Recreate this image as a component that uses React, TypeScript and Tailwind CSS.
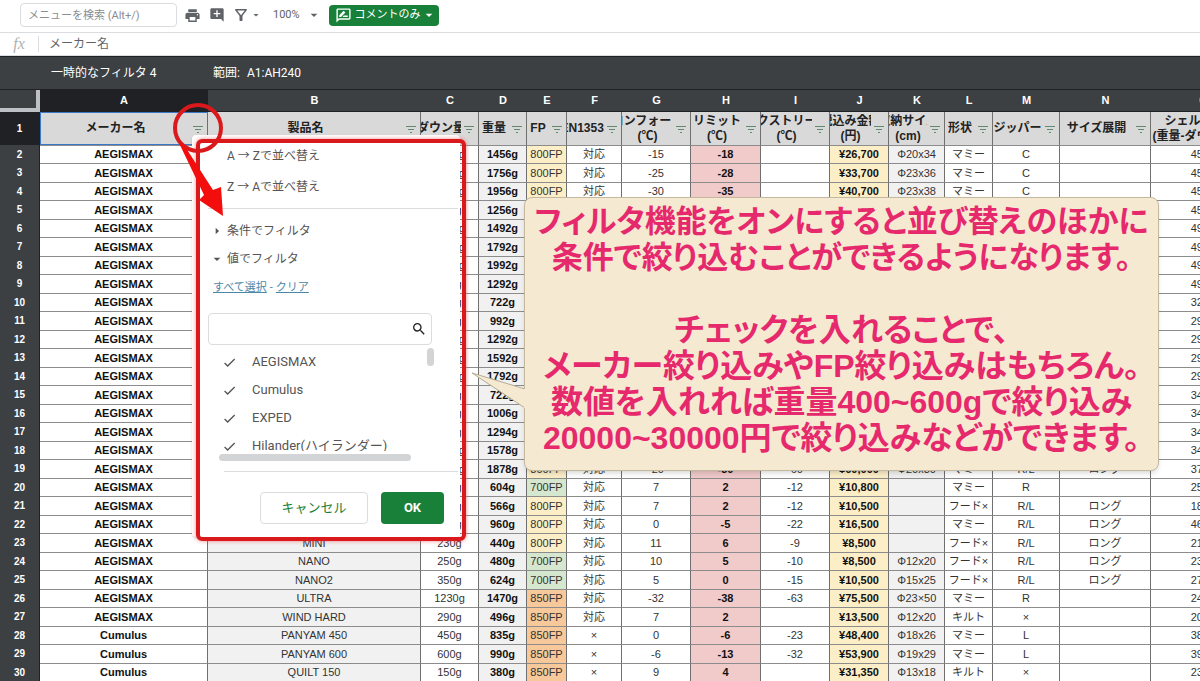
import { clsx } from 'clsx';
import { MdAddComment, MdArrowDropDown, MdArrowRight, MdCheck, MdOutlineFilterAlt, MdOutlineRateReview, MdPrint, MdSearch } from 'react-icons/md';

type Column = {
  id: string;
  width: string;
  title: string[];
  cell?: string;
};

const columns: Column[] = [
  { id: 'A', width: 'w-[168px]', title: ['メーカー名'], cell: 'font-bold text-[#111]' },
  { id: 'B', width: 'w-[213px]', title: ['製品名'], cell: 'bg-[#f1f1f1]' },
  { id: 'C', width: 'w-[58px]', title: ['ダウン量'] },
  { id: 'D', width: 'w-[48px]', title: ['重量'], cell: 'bg-[#f1f1f1] font-bold text-[#111]' },
  { id: 'E', width: 'w-[40px]', title: ['FP'] },
  { id: 'F', width: 'w-[55px]', title: ['EN13537'] },
  { id: 'G', width: 'w-[69px]', title: ['コンフォート', '(℃)'] },
  { id: 'H', width: 'w-[70px]', title: ['リミット', '(℃)'], cell: 'bg-[#f1caca] font-bold text-[#111]' },
  { id: 'I', width: 'w-[69px]', title: ['エクストリーム', '(℃)'] },
  { id: 'J', width: 'w-[59px]', title: ['税込み金額', '(円)'], cell: 'bg-[#fcefc8] font-bold text-[#111]' },
  { id: 'K', width: 'w-[56px]', title: ['収納サイズ', '(cm)'], cell: 'bg-[#f1f1f1]' },
  { id: 'L', width: 'w-[48px]', title: ['形状'] },
  { id: 'M', width: 'w-[67px]', title: ['ジッパー'] },
  { id: 'N', width: 'w-[91px]', title: ['サイズ展開'] },
  { id: 'O', width: 'w-[105px]', title: ['シェル重量', '(重量-ダウン量)'] },
];

const fpColor: Record<string, string> = {
  '700FP': 'bg-[#d5e8cf]',
  '800FP': 'bg-[#fcefc8]',
  '850FP': 'bg-[#f7c899]',
};

// maker, name, down, weight, FP, EN13537, comfort, limit, extreme, price, size, shape, zip, sizes, shell
const rows: string[][] = [
  ['AEGISMAX', '', '1000g', '1456g', '800FP', '対応', '-15', '-18', '', '¥26,700', 'Φ20x34', 'マミー', 'C', '', '456g'],
  ['AEGISMAX', '', '1300g', '1756g', '800FP', '対応', '-25', '-28', '', '¥33,700', 'Φ23x36', 'マミー', 'C', '', '456g'],
  ['AEGISMAX', '', '1500g', '1956g', '800FP', '対応', '-30', '-35', '', '¥40,700', 'Φ23x38', 'マミー', 'C', '', '456g'],
  ['AEGISMAX', '', '800g', '1256g', '', '', '', '', '', '', '', '', '', '', '456g'],
  ['AEGISMAX', '', '1000g', '1492g', '', '', '', '', '', '', '', '', '', '', '492g'],
  ['AEGISMAX', '', '1300g', '1792g', '', '', '', '', '', '', '', '', '', '', '492g'],
  ['AEGISMAX', '', '1500g', '1992g', '', '', '', '', '', '', '', '', '', '', '492g'],
  ['AEGISMAX', '', '800g', '1292g', '', '', '', '', '', '', '', '', '', '', '492g'],
  ['AEGISMAX', '', '400g', '722g', '', '', '', '', '', '', '', '', '', '', '322g'],
  ['AEGISMAX', '', '700g', '992g', '', '', '', '', '', '', '', '', '', '', '292g'],
  ['AEGISMAX', '', '1000g', '1292g', '', '', '', '', '', '', '', '', '', '', '292g'],
  ['AEGISMAX', '', '1300g', '1592g', '', '', '', '', '', '', '', '', '', '', '292g'],
  ['AEGISMAX', '', '1500g', '1792g', '', '', '', '', '', '', '', '', '', '', '292g'],
  ['AEGISMAX', '', '380g', '722g', '', '', '', '', '', '', '', '', '', '', '342g'],
  ['AEGISMAX', '', '660g', '1006g', '', '', '', '', '', '', '', '', '', '', '346g'],
  ['AEGISMAX', '', '950g', '1294g', '', '', '', '', '', '', '', '', '', '', '344g'],
  ['AEGISMAX', '', '1230g', '1578g', '', '', '', '', '', '', '', '', '', '', '348g'],
  ['AEGISMAX', '', '1500g', '1878g', '800FP', '対応', '-20', '-30', '-60', '¥60,000', 'Φ20x30', 'マミー', 'R/L', 'ロング', '378g'],
  ['AEGISMAX', '', '350g', '604g', '700FP', '対応', '7', '2', '-12', '¥10,800', '', 'マミー', 'R', '', '254g'],
  ['AEGISMAX', '', '380g', '566g', '800FP', '対応', '7', '2', '-12', '¥10,500', '', 'フード×', 'R/L', 'ロング', '186g'],
  ['AEGISMAX', '', '500g', '960g', '800FP', '対応', '0', '-5', '-22', '¥16,500', '', 'マミー', 'R/L', 'ロング', '460g'],
  ['AEGISMAX', 'MINI', '230g', '440g', '800FP', '対応', '11', '6', '-9', '¥8,500', '', 'フード×', 'R/L', 'ロング', '210g'],
  ['AEGISMAX', 'NANO', '250g', '480g', '700FP', '対応', '10', '5', '-10', '¥8,500', 'Φ12x20', 'フード×', 'R/L', 'ロング', '230g'],
  ['AEGISMAX', 'NANO2', '350g', '624g', '700FP', '対応', '5', '0', '-15', '¥10,500', 'Φ15x25', 'フード×', 'R/L', 'ロング', '274g'],
  ['AEGISMAX', 'ULTRA', '1230g', '1470g', '850FP', '対応', '-32', '-38', '-63', '¥75,500', 'Φ23×50', 'マミー', 'R', '', '240g'],
  ['AEGISMAX', 'WIND HARD', '290g', '496g', '850FP', '対応', '7', '2', '', '¥13,500', 'Φ12x20', 'キルト', '×', '', '206g'],
  ['Cumulus', 'PANYAM 450', '450g', '835g', '850FP', '×', '0', '-6', '-23', '¥48,400', 'Φ18x26', 'マミー', 'L', '', '385g'],
  ['Cumulus', 'PANYAM 600', '600g', '990g', '850FP', '×', '-6', '-13', '-32', '¥53,900', 'Φ19x29', 'マミー', 'L', '', '390g'],
  ['Cumulus', 'QUILT 150', '150g', '380g', '850FP', '×', '9', '4', '', '¥31,350', 'Φ13x18', 'キルト', '×', '', '230g'],
];

const makers = ['AEGISMAX', 'Cumulus', 'EXPED', 'Hilander(ハイランダー)'];

const calloutIntro = [
  'フィルタ機能をオンにすると並び替えのほかに',
  '条件で絞り込むことができるようになります。',
];

const calloutDetail = [
  'チェックを入れることで、',
  'メーカー絞り込みやFP絞り込みはもちろん。',
  '数値を入れれば重量400~600gで絞り込み',
  '20000~30000円で絞り込みなどができます。',
];

function Toolbar() {
  return (
    <div className="flex h-8 items-center bg-white pb-[2px] pl-5 text-[11px] text-[#5f6368]">
      <input
        type="text"
        aria-label="メニューを検索"
        placeholder="メニューを検索 (Alt+/)"
        className="h-6 w-[157px] rounded border border-[#dadce0] px-[7px] placeholder:text-[#8a8d91]"
      />
      <button aria-label="印刷" className="ml-[7px]"><MdPrint size={17} /></button>
      <button aria-label="コメントを追加" className="ml-2"><MdAddComment size={16} /></button>
      <button aria-label="フィルタ" className="ml-[7px] flex items-center">
        <MdOutlineFilterAlt size={18} />
        <MdArrowDropDown size={12} />
      </button>
      <button aria-label="ズーム" className="ml-[11px] flex items-center">
        100%
        <MdArrowDropDown size={16} className="ml-[6px]" />
      </button>
      <button className="ml-[7px] flex h-[21px] w-[110px] items-center rounded-sm bg-[#188038] pl-[6px] text-white">
        <MdOutlineRateReview size={17} />
        <span className="ml-[3px] whitespace-nowrap">コメントのみ</span>
        <MdArrowDropDown size={16} />
      </button>
    </div>
  );
}

function FilterIcon() {
  return (
    <svg viewBox="0 0 10 8" className="h-2 w-[10px] shrink-0" stroke="#5f8a70" strokeWidth="1">
      <path d="M0 1.5h10M2 4.5h6M4 7.5h2" />
    </svg>
  );
}

function Sheet() {
  return (
    <div className="overflow-hidden">
      <table className="w-[1256px] table-fixed border-separate border-spacing-0 text-center text-[11px] leading-[17px] text-[#333]">
        <colgroup>
          <col className="w-10" />
          {columns.map((c) => <col key={c.id} className={c.width} />)}
        </colgroup>
        <thead>
          <tr className="h-[22px] bg-[#3c4043] text-white">
            <td className="border-r-4 border-b-4 border-[#bdc1c6] bg-[#3c4043]" />
            {columns.map((c) => (
              <th key={c.id} scope="col" className={clsx('border-b border-[#202124]', c.id === 'A' && 'bg-[#202124]')}>{c.id}</th>
            ))}
          </tr>
          <tr className="h-[33px] bg-[#d9d9d9]">
            <th scope="row" className="border-r border-[#202124] bg-[#202124] text-[10px] text-white">1</th>
            {columns.map((c) => (
              <th
                key={c.id}
                className={clsx(
                  'p-0 font-bold text-[#222]',
                  c.id === 'A' ? 'border border-[#3c78c8]' : 'border-r border-[#707070]',
                )}
              >
                <div className="flex items-center gap-[3px] pr-1">
                  <div className="flex min-w-0 flex-1 flex-col items-center overflow-hidden text-[12px] leading-[15px] whitespace-nowrap">
                    {c.title.map((t) => <span key={t}>{t}</span>)}
                  </div>
                  <FilterIcon />
                </div>
              </th>
            ))}
          </tr>
        </thead>
        <tbody>
          {rows.map((row, i) => (
            <tr key={i} className="h-[18px] even:h-[19px]">
              <th scope="row" className="border-r border-[#202124] bg-[#3c4043] p-0 text-[10px] text-white">{i + 2}</th>
              {row.map((value, n) => (
                <td
                  key={columns[n].id}
                  className={clsx(
                    'overflow-hidden border-t border-r border-t-[#8c8c8c] border-r-[#707070] p-0 whitespace-nowrap',
                    columns[n].cell,
                    fpColor[value],
                  )}
                >
                  {value}
                </td>
              ))}
            </tr>
          ))}
        </tbody>
      </table>
    </div>
  );
}

function FilterMenu() {
  return (
    <div className="absolute top-[135px] left-[192px] h-[402px] w-[268px] rounded bg-white pt-[5px] text-[12px] text-[#555] shadow-sm">
      <button className="flex h-[31px] w-full items-center pl-[35px]">A → Zで並べ替え</button>
      <button className="flex h-[31px] w-full items-center pl-[35px]">Z → Aで並べ替え</button>
      <hr className="mt-[6px] mr-[2px] mb-2 ml-4 border-[#dadce0]" />
      <button className="flex h-7 w-full items-center pl-[17px]"><MdArrowRight size={16} className="mr-[2px]" />条件でフィルタ</button>
      <button className="flex h-7 w-full items-center pl-[17px]"><MdArrowDropDown size={16} className="mr-[2px]" />値でフィルタ</button>
      <div className="flex h-[30px] items-center gap-[3px] pl-[21px] text-[11px] text-[#4a86a8]">
        <a href="#all" className="underline">すべて選択</a>
        <span>-</span>
        <a href="#clear" className="underline">クリア</a>
      </div>
      <div className="mt-[10px] ml-4 flex h-8 w-56 items-center rounded-sm border border-[#dadce0] pr-1">
        <input type="text" aria-label="値を検索" className="min-w-0 flex-1" />
        <MdSearch size={16} className="text-[#222]" />
      </div>
      <div className="mt-[2px] mr-[26px] ml-[30px] flex justify-between">
        <div className="h-[104px] overflow-hidden pt-px">
          {makers.map((m) => (
            <label key={m} className="relative flex h-7 items-center text-[13px]">
              <input type="checkbox" defaultChecked className="peer sr-only" />
              <MdCheck size={15} className="invisible mr-[15px] peer-checked:visible" />
              {m}
            </label>
          ))}
        </div>
        <div className="mt-[1px] h-[18px] w-[7px] rounded bg-[#d3d4d6]" />
      </div>
      <div className="mt-[3px] ml-[27px] h-[7px] w-48 rounded bg-[#d3d4d6]" />
      <hr className="mt-[10px] mr-[2px] ml-8 border-[#dadce0]" />
      <div className="mt-5 mr-4 flex justify-end gap-[13px] text-[13px]">
        <button className="h-8 w-[108px] rounded border border-[#dadce0] text-[#188038]">キャンセル</button>
        <button className="h-8 w-[63px] rounded bg-[#188038] font-bold text-white">OK</button>
      </div>
    </div>
  );
}

// red frame, circle and arrow that point at the filter button
function Markup() {
  return (
    <>
      <div className="absolute top-[139px] left-[196px] h-[402px] w-[270px] rounded-md border-4 border-[#d9191c] shadow-[0_0_4px_rgba(240,60,60,0.6)]" />
      <svg viewBox="0 0 60 120" className="absolute top-[100px] left-[170px] h-[120px] w-[60px]">
        <circle cx="28" cy="28" r="23" fill="none" stroke="#d9191c" strokeWidth="4" />
        <path d="M9 43l5 2 29 45 8-3 2 29-24-16 5-5z" fill="#f40d0d" />
      </svg>
    </>
  );
}

function Callout() {
  return (
    <div className="absolute top-[197px] left-[524px] w-[635px] rounded-lg border border-[#c4b99f] bg-[#f5e9d2] pt-[6px] pb-[14px] text-center leading-9 font-bold whitespace-nowrap text-[#e6296c] shadow-md [font-feature-settings:'palt'] font-['Liberation_Sans','Noto_Sans_CJK_JP',sans-serif]">
      <svg viewBox="0 0 56 40" className="absolute top-[172px] -left-[54px] h-10 w-14">
        <path d="M54 19L1 3l53 35" fill="#f5e9d2" stroke="#b5ab94" />
        <path d="M53 19h3v19h-3z" fill="#f5e9d2" />
      </svg>
      <div className="mb-9 text-[31px] leading-9">
        {calloutIntro.map((line) => <p key={line}>{line}</p>)}
      </div>
      <div className="text-[32px] leading-9">
        {calloutDetail.map((line) => <p key={line}>{line}</p>)}
      </div>
    </div>
  );
}

export default function App() {
  return (
    <main className="relative h-screen overflow-hidden bg-white font-['Roboto','Noto_Sans_CJK_JP',sans-serif]">
      <Toolbar />
      <div className="flex h-6 items-center border-y border-[#dadce0] text-[12px] text-[#5f6368]">
        <span className="w-[39px] border-r border-[#dadce0] text-center font-['Liberation_Serif',serif] text-[16px] leading-4 text-[#b0b0b0] italic">fx</span>
        <span className="pl-[10px]">メーカー名</span>
      </div>
      <div className="flex h-[34px] items-center border-y border-[#202124] bg-[#3c4043] pl-[51px] text-[12px] text-white">
        <span className="w-[162px]">一時的なフィルタ 4</span>
        <span className="w-[34px]">範囲:</span>
        <span>A1:AH240</span>
      </div>
      <div className="font-['Liberation_Sans','Noto_Sans_CJK_JP',sans-serif]">
        <Sheet />
      </div>
      <FilterMenu />
      <Markup />
      <Callout />
    </main>
  );
}
